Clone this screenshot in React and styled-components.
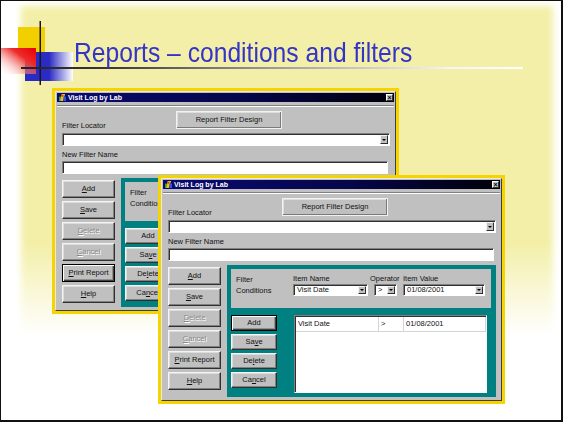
import React from 'react';
import styled, { createGlobalStyle } from 'styled-components';

const GlobalStyle = createGlobalStyle`
  html, body {
    margin: 0;
    padding: 0;
    background: #fff;
  }
  body {
    width: 563px;
    height: 422px;
    overflow: hidden;
    font-family: "Liberation Sans", Arial, sans-serif;
  }
`;

const UI_FONT = `"Liberation Sans", Arial, sans-serif`;

const Slide = styled.div`
  position: relative;
  width: 563px;
  height: 422px;
  box-sizing: border-box;
  border: 1px solid #111;
  border-right-width: 2px;
  border-bottom-width: 2px;
  background: #fff;
  overflow: hidden;
  isolation: isolate;

  &::before {
    content: '';
    position: absolute;
    left: 20px;
    top: 5px;
    right: 8px;
    bottom: 85px;
    background: linear-gradient(to bottom, #f3efa8 0%, #f3efa8 72%, rgba(243, 239, 168, 0) 100%);
    filter: blur(3px);
    z-index: -1;
  }
`;

const Header = styled.header`
  position: relative;
  height: 86px;
`;

const Ornament = styled.svg`
  position: absolute;
  left: -1px;
  top: -1px;
`;

const Title = styled.h1`
  position: relative;
  margin: 0;
  padding: 38px 0 0 73px;
  font: normal 28px/28px ${UI_FONT};
  color: #3434c8;
  white-space: nowrap;
  transform: scaleX(0.88);
  transform-origin: 73px 0;
`;

const Window = styled.div`
  position: absolute;
  left: ${(p) => p.$x}px;
  top: ${(p) => p.$y}px;
  width: 347px;
  height: ${(p) => p.$h}px;
  box-sizing: border-box;
  border: 3px solid #f6d400;
  background: #c0c0c0;
  display: flex;
  font: 7.5px/9px ${UI_FONT};
  color: #111;
`;

const Frame = styled.div`
  flex: 1;
  min-width: 0;
  display: flex;
  flex-direction: column;
  border: 1px solid;
  border-color: #e8e8e8 #404040 #404040 #e8e8e8;
  padding: 1px;
`;

const TitleBar = styled.div`
  height: 9px;
  display: flex;
  align-items: center;
  gap: 2px;
  padding: 0 1px 0 2px;
  background: linear-gradient(90deg, #0a0a72 0%, #06064a 55%, #000008 100%);
  color: #fff;
  font: bold 7px/9px ${UI_FONT};
`;

const CloseBox = styled.span`
  margin-left: auto;
  width: 7px;
  height: 7px;
  box-sizing: border-box;
  background: #c0c0c0;
  border: 1px solid;
  border-color: #fff #303030 #303030 #fff;
  color: #000;
  font: bold 7px/5px ${UI_FONT};
  text-align: center;
`;

const Separator = styled.div`
  margin-top: 3px;
  border-top: 1px solid #808080;
  border-bottom: 1px solid #fff;
`;

const Body = styled.div`
  flex: 1;
  display: flex;
  flex-direction: column;
  padding: 4px 4px 2px 5px;
  min-height: 0;
`;

const TopRow = styled.div`
  display: flex;
  align-items: flex-end;
  height: 19px;
`;

const Label = styled.div`
  width: ${(p) => (p.$w ? `${p.$w}px` : 'auto')};
  margin-top: ${(p) => p.$mt || 0}px;
  line-height: 9px;
  white-space: nowrap;
`;

const Button = styled.button`
  box-sizing: border-box;
  width: ${(p) => (p.$w ? `${p.$w}px` : '100%')};
  height: ${(p) => p.$h || 18}px;
  padding: 0;
  margin: 0;
  background: #c0c0c0;
  font: 7.5px/1 ${UI_FONT};
  color: ${(p) => (p.disabled ? '#8a8a8a' : '#111')};
  text-shadow: ${(p) => (p.disabled ? '1px 1px 0 #fff' : 'none')};
  border: 1px solid;
  border-color: ${(p) => (p.$default ? '#000' : '#f4f4f4 #303030 #303030 #f4f4f4')};
  box-shadow: ${(p) =>
    p.$default
      ? 'inset 1px 1px 0 #fff, inset -1px -1px 0 #404040, inset -2px -2px 0 #909090'
      : 'inset -1px -1px 0 #808080, inset 1px 1px 0 #dcdcdc'};
  text-align: center;
  cursor: default;

  u {
    text-decoration: underline;
    text-underline-offset: 1px;
  }
`;

const DesignButton = styled(Button)`
  margin-bottom: 1px;
  border-color: #f2f2f2;
  box-shadow: inset -1px -1px 0 #7a7a7a, inset 1px 1px 0 #dedede;
`;

const Field = styled.div`
  position: relative;
  box-sizing: border-box;
  width: ${(p) => (p.$w ? `${p.$w}px` : 'auto')};
  height: ${(p) => p.$h || 13}px;
  margin-top: ${(p) => p.$mt || 0}px;
  margin-left: ${(p) => p.$ml || 0}px;
  margin-right: ${(p) => p.$mr || 0}px;
  background: #fff;
  border: 1px solid;
  border-color: #808080 #fff #fff #808080;
  box-shadow: inset 1px 1px 0 #303030;
  display: flex;
  align-items: center;
  padding-left: 3px;
  font: 7.5px/1 ${UI_FONT};
  white-space: nowrap;
`;

const DropArrow = styled.span`
  position: absolute;
  right: 1px;
  top: 1px;
  bottom: 1px;
  width: 8px;
  box-sizing: border-box;
  background: #c0c0c0;
  border: 1px solid;
  border-color: #f4f4f4 #303030 #303030 #f4f4f4;

  &::after {
    content: '';
    position: absolute;
    left: 1px;
    top: 50%;
    margin-top: -1px;
    border-left: 2px solid transparent;
    border-right: 2px solid transparent;
    border-top: 2px solid #000;
  }
`;

const Lower = styled.div`
  flex: 1;
  display: flex;
  gap: 6px;
  margin-top: 4px;
  min-height: 0;
`;

const ButtonColumn = styled.div`
  width: ${(p) => p.$w}px;
  flex: none;
  display: flex;
  flex-direction: column;
  gap: 3px;
  padding-top: ${(p) => p.$pt || 0}px;
`;

const TealPanel = styled.div`
  flex: 1;
  display: flex;
  flex-direction: column;
  background: #008080;
  padding: 4px 5px 4px 4px;
  min-width: 0;
`;

const ConditionBar = styled.div`
  height: 39px;
  flex: none;
  box-sizing: border-box;
  display: flex;
  padding: 5px 0 0 5px;
  background: #c0c0c0;
`;

const Caption = styled.div`
  width: 57px;
  flex: none;
  line-height: 11px;
`;

const FieldGroup = styled.div`
  width: ${(p) => p.$w}px;
  flex: none;
  display: flex;
  flex-direction: column;
`;

const Workspace = styled.div`
  flex: 1;
  display: flex;
  gap: 17px;
  margin-top: 7px;
  padding-right: 4px;
  min-height: 0;
`;

const Grid = styled.div`
  flex: 1;
  box-sizing: border-box;
  background: #fff;
  border: 1px solid;
  border-color: #808080 #fff #fff #808080;
  box-shadow: inset 1px 1px 0 #303030;
  padding: 1px 0 0 1px;
`;

const GridRow = styled.div`
  display: grid;
  grid-template-columns: 83px 25px 1fr;
  height: 15px;
`;

const Cell = styled.div`
  border-right: 1px solid #d4d4d4;
  border-bottom: 1px solid #d4d4d4;
  padding-left: 2px;
  line-height: 13px;
  white-space: nowrap;
`;

const AppIcon = () => (
  <svg width="7" height="7" viewBox="0 0 8 8">
    <rect x="0" y="3" width="3" height="5" fill="#2ca040" />
    <path d="M3 0 L7 0 L4.5 8 L1.5 8 Z" fill="#f2c200" />
    <rect x="5" y="3" width="3" height="5" fill="#3454d8" />
    <rect x="3" y="1" width="2" height="2" fill="#d83020" />
  </svg>
);

const Combo = ({ children, ...rest }) => (
  <Field {...rest}>
    {children}
    <DropArrow />
  </Field>
);

// the back window is mostly covered, so it leaves out what would sit under the front one
const Dialog = ({ x, y, h, defaultKey, covered }) => (
  <Window $x={x} $y={y} $h={h}>
    <Frame>
      <TitleBar>
        <AppIcon />
        <span>Visit Log by Lab</span>
        <CloseBox>×</CloseBox>
      </TitleBar>
      <Separator />
      <Body>
        <TopRow>
          <Label $w={114}>Filter Locator</Label>
          <DesignButton $w={106} $h={18}>Report Filter Design</DesignButton>
        </TopRow>
        <Combo $mt={3} />
        <Label $mt={4}>New Filter Name</Label>
        <Field $mt={2} $mr={2} />
        <Lower>
          <ButtonColumn $w={53} $pt={2}>
            <Button><u>A</u>dd</Button>
            <Button><u>S</u>ave</Button>
            <Button disabled><u>D</u>elete</Button>
            <Button disabled><u>C</u>ancel</Button>
            <Button $default={defaultKey === 'print'}><u>P</u>rint Report</Button>
            <Button><u>H</u>elp</Button>
          </ButtonColumn>
          <TealPanel>
            <ConditionBar>
              <Caption>
                Filter
                <br />
                Conditions
              </Caption>
              {!covered && (
                <>
                  <FieldGroup $w={77}>
                    <Label>Item Name</Label>
                    <Combo $w={75} $h={12} $mt={1}>Visit Date</Combo>
                  </FieldGroup>
                  <FieldGroup $w={33}>
                    <Label>Operator</Label>
                    <Combo $w={23} $h={12} $mt={1} $ml={4}>&gt;</Combo>
                  </FieldGroup>
                  <FieldGroup $w={82}>
                    <Label>Item Value</Label>
                    <Combo $w={82} $h={12} $mt={1}>01/08/2001</Combo>
                  </FieldGroup>
                </>
              )}
            </ConditionBar>
            <Workspace>
              <ButtonColumn $w={46}>
                <Button $h={16} $default={defaultKey === 'add'}>Add</Button>
                <Button $h={16}>Sa<u>v</u>e</Button>
                <Button $h={16}>De<u>l</u>ete</Button>
                <Button $h={16}>Ca<u>n</u>cel</Button>
              </ButtonColumn>
              <Grid>
                {!covered && (
                  <GridRow>
                    <Cell>Visit Date</Cell>
                    <Cell>&gt;</Cell>
                    <Cell>01/08/2001</Cell>
                  </GridRow>
                )}
              </Grid>
            </Workspace>
          </TealPanel>
        </Lower>
      </Body>
    </Frame>
  </Window>
);

const App = () => (
  <>
    <GlobalStyle />
    <Slide>
      <Header>
        <Ornament width="530" height="90" viewBox="0 0 530 90">
          <defs>
            <linearGradient id="redFade" x1="1" y1="0" x2="0" y2="1">
              <stop offset="0" stopColor="#e60000" />
              <stop offset="0.35" stopColor="#ee2a2a" />
              <stop offset="1" stopColor="#ffffff" stopOpacity="0" />
            </linearGradient>
            <linearGradient id="blueFade" x1="0" y1="0" x2="1" y2="0">
              <stop offset="0" stopColor="#2a2ac4" />
              <stop offset="0.5" stopColor="#2a2ac4" />
              <stop offset="1" stopColor="#ffffff" />
            </linearGradient>
            <linearGradient id="ruleFade" x1="0" y1="0" x2="1" y2="0">
              <stop offset="0" stopColor="#222" />
              <stop offset="0.18" stopColor="#3a3a3a" />
              <stop offset="0.5" stopColor="#9a9a9a" />
              <stop offset="0.85" stopColor="#f4f4f4" />
              <stop offset="1" stopColor="#ffffff" />
            </linearGradient>
          </defs>
          <rect x="18" y="27" width="27" height="30" fill="#f2d000" />
          <rect x="25" y="52" width="48" height="29" fill="url(#blueFade)" />
          <rect x="0" y="48" width="36" height="26" fill="url(#redFade)" />
          <rect x="39.5" y="21" width="1.5" height="64" fill="#161616" />
          <rect x="21" y="67" width="502" height="2" fill="url(#ruleFade)" />
        </Ornament>
        <Title>Reports – conditions and filters</Title>
      </Header>
      <Dialog x={51} y={87} h={226} defaultKey="print" covered />
      <Dialog x={157} y={174} h={229} defaultKey="add" />
    </Slide>
  </>
);

export default App;
